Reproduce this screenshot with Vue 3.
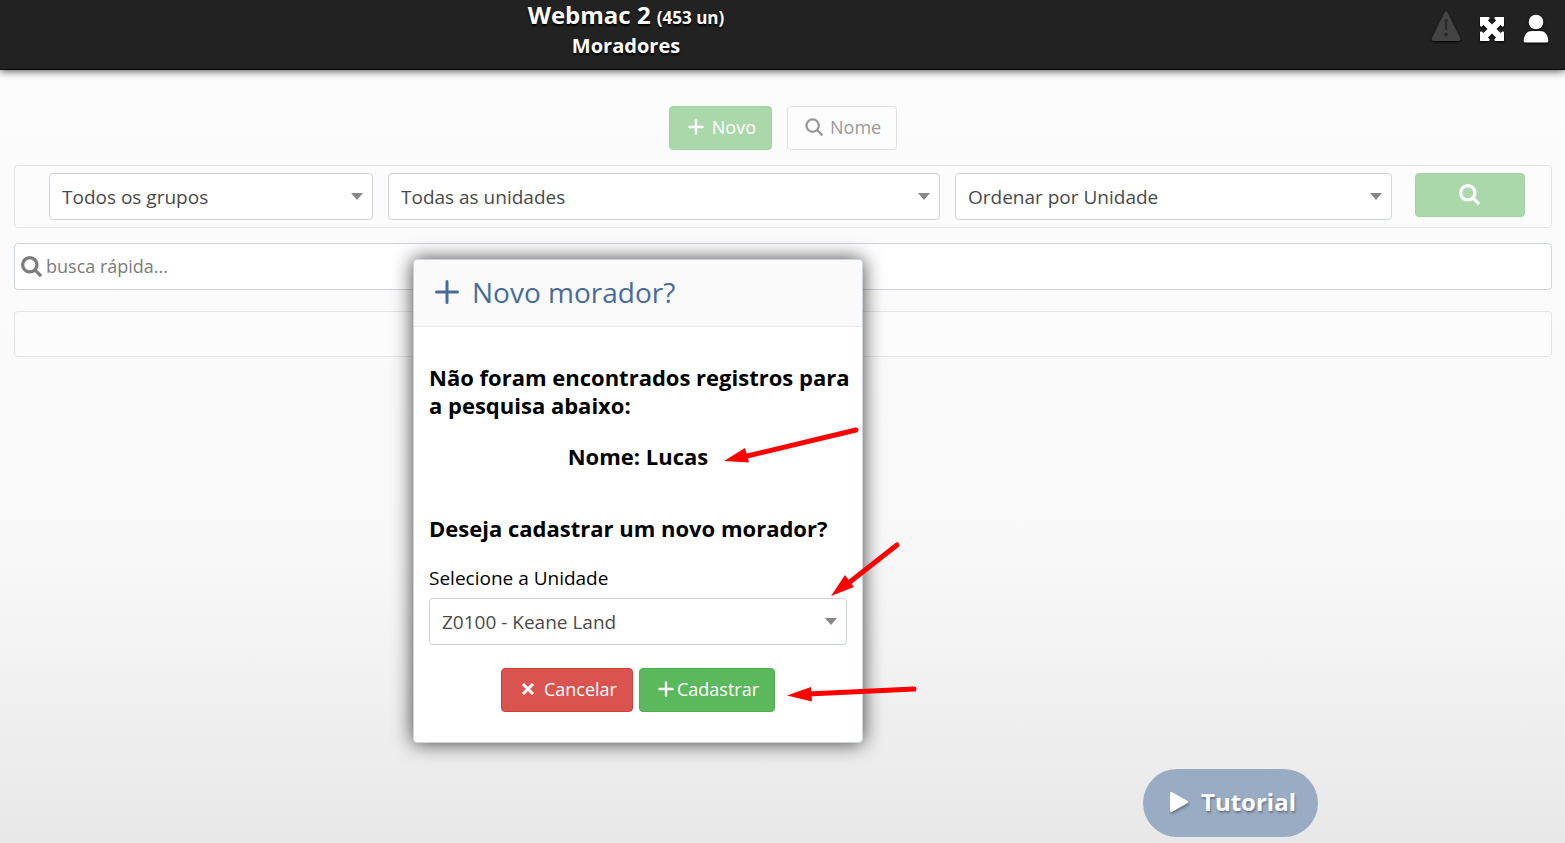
<template>
  <div class="page">
    <header class="topbar">
      <div class="topbar-title">
        <h1>Webmac 2 <small>(453 un)</small></h1>
        <h2>Moradores</h2>
      </div>
      <nav class="topbar-icons">
        <button type="button" class="icon-btn alert" aria-label="Alertas">
          <svg width="30" height="30" viewBox="0 0 30 30">
            <path d="M13.500 1.500Q15 -1 16.500 1.500L29.200 27Q30 30 27.500 30H2.500Q0 30 .8 27Z" fill="#444" />
            <path d="M13.500 8h3l-.6 11h-1.800z" fill="#2b2b2b" />
            <circle cx="15" cy="23.500" r="2" fill="#2b2b2b" />
          </svg>
        </button>
        <button type="button" class="icon-btn" aria-label="Tela cheia">
          <svg width="26" height="26" viewBox="0 0 26 26" fill="#fff">
            <path d="M1.500 1H10l.8 1.300L9 4.500 13 8.500 17 4.500l-1.800-2.200L16 1h8.500l.5.500V10l-1.300.8L21.500 9 17.500 13l4 4 2.200-1.800 1.300.8v8.500l-.5.500H16l-.8-1.300 1.800-2.200L13 17.500 9 21.500l1.800 2.200L10 25H1.500l-.5-.5V16l1.300-.8L4.500 17 8.500 13 4.500 9l-2.200 1.800L1 10V1.500z" />
          </svg>
        </button>
        <button type="button" class="icon-btn" aria-label="Usuário">
          <svg width="26" height="30" viewBox="0 0 26 30" fill="#fff">
            <circle cx="13" cy="8" r="7.300" />
            <path d="M2 28.500Q.5 28.500.7 26.500C1.200 20 4.500 17 9 17h8c4.500 0 7.800 3 8.300 9.500Q25.500 28.500 24 28.500z" />
          </svg>
        </button>
      </nav>
    </header>

    <main class="content">
      <div class="actions">
        <button type="button" class="btn btn-success faded">
          <svg class="ico-plus" viewBox="0 0 16 16"><path d="M8 1.500v13M1.500 8h13" /></svg>
          <span>Novo</span>
        </button>
        <button type="button" class="btn btn-default">
          <svg class="ico-search" viewBox="0 0 20 20"><circle cx="8" cy="8" r="6.500" /><path d="M12.800 12.800l5.500 5.500" /></svg>
          <span>Nome</span>
        </button>
      </div>

      <form class="panel filters" @submit.prevent>
        <div v-for="f in filters" :key="f.id" class="select-wrap">
          <select :id="f.id" class="field" :aria-label="f.label">
            <option>{{ f.value }}</option>
          </select>
          <svg class="caret" viewBox="0 0 12 7"><path d="M0 0h12L6 7z" /></svg>
        </div>
        <button type="submit" class="btn btn-success faded btn-search" aria-label="Pesquisar">
          <svg class="ico-search big" viewBox="0 0 20 20"><circle cx="8" cy="8" r="6.500" /><path d="M12.800 12.800l5.500 5.500" /></svg>
        </button>
      </form>

      <label class="field quick">
        <svg class="ico-search big" viewBox="0 0 20 20"><circle cx="8" cy="8" r="6.500" /><path d="M12.800 12.800l5.500 5.500" /></svg>
        <input v-model="quickSearch" type="text" placeholder="busca rápida..." />
      </label>

      <div class="panel empty"></div>
    </main>

    <section class="modal" role="dialog" aria-labelledby="modal-title">
      <header class="modal-head">
        <svg class="ico-plus" viewBox="0 0 16 16"><path d="M8 1v14M1 8h14" /></svg>
        <h3 id="modal-title">Novo morador?</h3>
      </header>
      <div class="modal-body">
        <h4>Não foram encontrados registros para<br />a pesquisa abaixo:</h4>
        <h4 class="searched">Nome: Lucas</h4>
        <h4>Deseja cadastrar um novo morador?</h4>
        <label for="unidade">Selecione a Unidade</label>
        <div class="select-wrap">
          <select id="unidade" class="field">
            <option>Z0100 - Keane Land</option>
          </select>
          <svg class="caret" viewBox="0 0 12 7"><path d="M0 0h12L6 7z" /></svg>
        </div>
        <div class="modal-actions">
          <button type="button" class="btn btn-danger">
            <svg class="ico-times" viewBox="0 0 14 14"><path d="M2 2l10 10M12 2L2 12" /></svg>
            <span>Cancelar</span>
          </button>
          <button type="button" class="btn btn-success tight">
            <svg class="ico-plus" viewBox="0 0 16 16"><path d="M8 1.500v13M1.500 8h13" /></svg>
            <span>Cadastrar</span>
          </button>
        </div>
      </div>

      <svg class="arrows" width="510" height="484" viewBox="0 0 510 484">
        <g v-for="(a, i) in arrows" :key="i">
          <path :d="a.line" class="arrow-line" />
          <path :d="a.head" class="arrow-head" />
        </g>
      </svg>
    </section>

    <button type="button" class="tutorial">
      <svg width="20" height="24" viewBox="0 0 20 24"><path d="M2.500 3.500v17L17.500 12z" fill="#fff" stroke="#fff" stroke-width="3" stroke-linejoin="round" /></svg>
      <span>Tutorial</span>
    </button>
  </div>
</template>

<script setup>
import { ref } from 'vue'

const quickSearch = ref('')

const filters = [
  { id: 'grupo', label: 'Grupo', value: 'Todos os grupos' },
  { id: 'unidades', label: 'Unidades', value: 'Todas as unidades' },
  { id: 'ordem', label: 'Ordenação', value: 'Ordenar por Unidade' }
]

// setas que destacam os campos do modal
const arrows = [
  { line: 'M442 171L329 198', head: 'M310 202L331 189L335 203.500Z' },
  { line: 'M483 286L432 326', head: 'M417 337L431 316L440 328Z' },
  { line: 'M500 430L394 435', head: 'M373 436.500L397 428L398 442.500Z' }
]
</script>

<style>
body {
  margin: 0;
}
</style>

<style scoped>
.page {
  position: relative;
  min-height: 100vh;
  background: linear-gradient(#fdfdfd 0%, #f8f8f8 66%, #e8e8e8 100%);
  font-family: "Open Sans", sans-serif;
  font-size: 18px;
  color: #000;
}

* {
  box-sizing: border-box;
}

button,
select,
input {
  font: inherit;
}

h1,
h2,
h3,
h4 {
  margin: 0;
}

svg {
  display: block;
  flex: none;
}

.topbar {
  display: grid;
  grid-template-columns: 4fr 1fr;
  height: 70px;
  background: #222;
  border-bottom: 1px solid #090909;
  box-shadow: 0 1px 8px rgba(0, 0, 0, 0.7);
  color: #fff;
}

.topbar-title {
  text-align: center;
  text-shadow: 0 2px 2px #000;
}

.topbar-title h1 {
  font-size: 24px;
  line-height: 30px;
}

.topbar-title small {
  font-size: 17px;
}

.topbar-title h2 {
  font-size: 20px;
  line-height: 26px;
}

.topbar-icons {
  display: flex;
  justify-content: flex-end;
  gap: 18px;
  padding: 14px 16px 0 0;
}

.icon-btn {
  display: flex;
  align-items: center;
  height: 30px;
  padding: 0;
  border: 0;
  background: none;
  filter: drop-shadow(0 1px 1px #000);
}

.alert {
  align-items: flex-start;
  margin-top: -3px;
}

.content {
  padding: 36px 13px 0 14px;
}

.actions {
  display: flex;
  justify-content: center;
  gap: 15px;
}

.btn {
  display: flex;
  align-items: center;
  justify-content: center;
  gap: 8px;
  height: 44px;
  padding: 0 15px 2px 18px;
  border: 1px solid transparent;
  border-radius: 4px;
  color: #fff;
}

.btn-success {
  background: #5cb85c;
  border-color: #4cae4c;
}

.btn-success.faded {
  background: #aad8aa;
  border-color: #a2d3a2;
}

.btn-danger {
  gap: 9px;
  padding: 0 15px 2px 19px;
  background: #d9534f;
  border-color: #d43f3a;
}

.btn-default {
  gap: 6px;
  padding: 0 15px 2px 17px;
  background: #fdfdfd;
  border-color: #e0e0e0;
  color: #999;
}

.btn.tight {
  gap: 3px;
}

.ico-plus {
  width: 16px;
  height: 16px;
  fill: none;
  stroke: currentColor;
  stroke-width: 2.400;
  stroke-linecap: round;
}

.ico-times {
  width: 14px;
  height: 14px;
  fill: none;
  stroke: currentColor;
  stroke-width: 3;
}

.ico-search {
  width: 19px;
  height: 19px;
  fill: none;
  stroke: currentColor;
  stroke-width: 2.400;
}

.ico-search.big {
  width: 22px;
  height: 22px;
  stroke-width: 3;
}

.panel {
  border: 1px solid #e4e4e4;
  border-radius: 4px;
  background: #fcfcfc;
}

.filters {
  display: grid;
  grid-template-columns: 324fr 552fr 437fr 118px;
  gap: 15px;
  margin-top: 15px;
  padding: 7px 26px 7px 34px;
}

.btn-search {
  margin-left: 8px;
  padding: 0;
}

.select-wrap {
  position: relative;
}

.field {
  width: 100%;
  height: 47px;
  border: 1px solid #ced4da;
  border-radius: 4px;
  background: #fff;
  color: #495057;
}

select.field {
  display: block;
  padding: 0 32px 0 12px;
  appearance: none;
  color: #4a4a4a;
  font-size: 19px;
}

.caret {
  position: absolute;
  top: 20px;
  right: 10px;
  width: 12px;
  height: 7px;
  fill: #888;
  pointer-events: none;
}

.quick {
  display: flex;
  align-items: center;
  gap: 3px;
  margin-top: 15px;
  padding: 0 6px;
  color: #7c7c7c;
}

.quick input {
  flex: 1;
  padding: 0 0 2px;
  border: 0;
  outline: 0;
  background: none;
}

.quick input::placeholder {
  color: #7c7c7c;
}

.empty {
  height: 46px;
  margin-top: 21px;
}

.modal {
  position: absolute;
  top: 259px;
  left: 413px;
  width: 450px;
  border: 1px solid #ced4da;
  border-radius: 4px;
  background: #fff;
  box-shadow: 0 0 20px rgba(0, 0, 0, 0.75);
}

.modal-head {
  display: flex;
  align-items: center;
  gap: 13px;
  height: 67px;
  padding: 0 21px 2px;
  border-bottom: 1px solid #e9e9e9;
  border-radius: 4px 4px 0 0;
  background: #fafafa;
  color: #476c9b;
}

.modal-head .ico-plus {
  width: 24px;
  height: 24px;
  stroke-width: 2;
}

.modal-head h3 {
  font-size: 28px;
  font-weight: 400;
}

.modal-body {
  padding: 36px 15px 30px;
}

.modal-body h4 {
  font-size: 22px;
  line-height: 28px;
  white-space: nowrap;
}

.modal-body .searched {
  margin: 23px 0 44px;
  text-align: center;
}

.modal-body label {
  display: block;
  margin: 22px 0 6px;
  font-size: 19px;
  line-height: 28px;
}

.modal-actions {
  display: flex;
  justify-content: center;
  gap: 6px;
  margin-top: 23px;
}

.arrows {
  position: absolute;
  top: -1px;
  left: 0;
  pointer-events: none;
}

.arrow-line {
  fill: none;
  stroke: #f00;
  stroke-width: 5;
  stroke-linecap: round;
}

.arrow-head {
  fill: #f00;
}

.tutorial {
  position: absolute;
  right: 247px;
  bottom: 6px;
  display: flex;
  align-items: center;
  justify-content: center;
  gap: 12px;
  width: 175px;
  height: 68px;
  padding: 0 2px 3px 6px;
  border: 0;
  border-radius: 34px;
  background: #9aacc3;
  color: #fff;
  font-size: 24px;
  font-weight: 700;
  text-shadow: 1px 2px 2px rgba(0, 0, 0, 0.3);
}

.tutorial svg {
  filter: drop-shadow(1px 2px 1px rgba(0, 0, 0, 0.3));
}
</style>
